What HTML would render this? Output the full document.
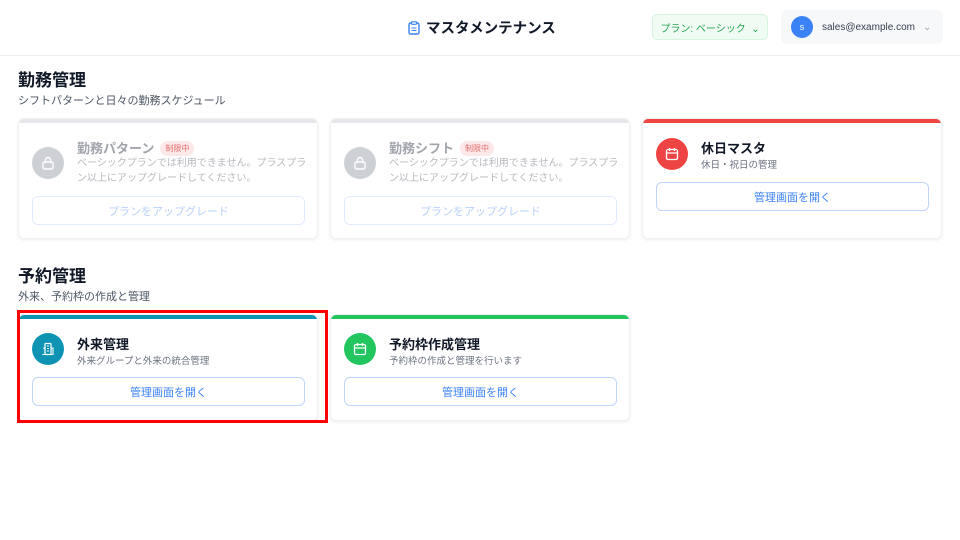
<!DOCTYPE html>
<html><head><meta charset="utf-8"><style>
*{margin:0;padding:0;box-sizing:border-box}
body{width:960px;height:540px;background:#fff;font-family:"Liberation Sans","Noto Sans CJK JP",sans-serif;position:relative;overflow:hidden;color:#111827}
.hdr{position:absolute;left:0;top:0;width:960px;height:56px;border-bottom:1px solid #eceef1}
.a{position:absolute}
.card{position:absolute;width:300px;background:#fff;border-radius:6px;box-shadow:0 1px 3px rgba(0,0,0,.08);border:1px solid #f0f1f3;overflow:hidden}
.bar{position:absolute;left:0;top:0;right:0;height:4px}
.ic{position:absolute;left:13px;width:32px;height:32px;border-radius:50%;display:flex;align-items:center;justify-content:center}
.t{position:absolute;left:58px;font-size:13px;font-weight:bold}
.s{position:absolute;left:58px;font-size:9.5px;color:#6b7280}
.btn{position:absolute;left:13px;width:273px;height:29px;border:1px solid #bfd3fb;border-radius:6px;font-size:11px;color:#3b82f6;display:flex;align-items:center;justify-content:center}
.h2{position:absolute;left:18px;font-size:17px;font-weight:bold}
.sub{position:absolute;left:18px;font-size:11px;color:#4b5563}
.badge{display:inline-block;font-size:8px;color:#e07070;background:#fde8e8;border-radius:9px;padding:2px 5px;margin-left:6px;vertical-align:2px;font-weight:normal}
</style></head><body>
<div class="hdr"></div>
<div class="a" style="left:408px;top:17px;font-size:14.5px;font-weight:bold;display:flex;align-items:center;gap:6px">
<svg width="12" height="14" viewBox="0 0 12 14"><rect x="1" y="2" width="10" height="11" rx="1.5" fill="none" stroke="#3b82f6" stroke-width="1.4"/><rect x="3.5" y="0.8" width="5" height="2.5" rx=".6" fill="#fff" stroke="#3b82f6" stroke-width="1.2"/><path d="M3.5 7h5M3.5 9.5h5" stroke="#3b82f6" stroke-width="1.1"/></svg>マスタメンテナンス</div>
<div class="a" style="left:652px;top:14px;width:116px;height:26px;border:1px solid #d6f3dd;background:#f0fcf3;border-radius:5px;font-size:10px;color:#22a352;display:flex;align-items:center;justify-content:center">プラン: ベーシック &nbsp;⌄</div>
<div class="a" style="left:781px;top:10px;width:162px;height:34px;background:#f7f8fa;border-radius:6px;font-size:10px;color:#374151;display:flex;align-items:center">
<div style="width:22px;height:22px;border-radius:50%;background:#3b82f6;color:#fff;font-size:9px;display:flex;align-items:center;justify-content:center;margin-left:10px;margin-right:9px">s</div>sales@example.com<span style="color:#9ca3af;margin-left:8px">⌄</span></div>

<div class="h2" style="top:66px">勤務管理</div>
<div class="sub" style="top:92px">シフトパターンと日々の勤務スケジュール</div>

<div class="card" style="left:18px;top:118px;height:121px"><div class="bar" style="background:#e5e7eb"></div>
<div class="ic" style="top:28px;background:#cdd0d5"><svg width="14" height="14" viewBox="0 0 14 14"><rect x="2" y="6" width="10" height="7" rx="1.5" fill="none" stroke="#fff" stroke-width="1.4"/><path d="M4.5 6V4a2.5 2.5 0 0 1 5 0v2" fill="none" stroke="#fff" stroke-width="1.4"/></svg></div>
<div class="t" style="top:19px;color:#a0a4ab">勤務パターン<span class="badge">制限中</span></div>
<div class="s" style="top:37px;color:#b6b9bf;width:232px;line-height:15px;font-size:10px">ベーシックプランでは利用できません。プラスプラン以上にアップグレードしてください。</div>
<div class="btn" style="top:77px;border-color:#e2ebfd;color:#b9d0fb">プランをアップグレード</div></div>

<div class="card" style="left:330px;top:118px;height:121px"><div class="bar" style="background:#e5e7eb"></div>
<div class="ic" style="top:28px;background:#cdd0d5"><svg width="14" height="14" viewBox="0 0 14 14"><rect x="2" y="6" width="10" height="7" rx="1.5" fill="none" stroke="#fff" stroke-width="1.4"/><path d="M4.5 6V4a2.5 2.5 0 0 1 5 0v2" fill="none" stroke="#fff" stroke-width="1.4"/></svg></div>
<div class="t" style="top:19px;color:#a0a4ab">勤務シフト<span class="badge">制限中</span></div>
<div class="s" style="top:37px;color:#b6b9bf;width:232px;line-height:15px;font-size:10px">ベーシックプランでは利用できません。プラスプラン以上にアップグレードしてください。</div>
<div class="btn" style="top:77px;border-color:#e2ebfd;color:#b9d0fb">プランをアップグレード</div></div>

<div class="card" style="left:642px;top:118px;height:121px"><div class="bar" style="background:#ef4444"></div>
<div class="ic" style="top:19px;background:#ef4444"><svg width="14" height="14" viewBox="0 0 14 14"><rect x="1.5" y="2.5" width="11" height="10" rx="1.5" fill="none" stroke="#fff" stroke-width="1.3"/><path d="M1.5 6h11M4.5 1v3M9.5 1v3" stroke="#fff" stroke-width="1.3"/></svg></div>
<div class="t" style="top:19px">休日マスタ</div>
<div class="s" style="top:38px">休日・祝日の管理</div>
<div class="btn" style="top:63px">管理画面を開く</div></div>

<div class="h2" style="top:262px">予約管理</div>
<div class="sub" style="top:288px">外来、予約枠の作成と管理</div>

<div class="card" style="left:18px;top:314px;height:107px"><div class="bar" style="background:#0e93b4"></div>
<div class="ic" style="top:18px;background:#0e93b4"><svg width="14" height="14" viewBox="0 0 14 14"><rect x="4" y="1.5" width="6" height="11" rx=".8" fill="none" stroke="#fff" stroke-width="1.2"/><path d="M1.5 12.5h11M2 6h2v6.5M10 6h2v6.5M6 4h2M6 6.5h2M6 9h2" fill="none" stroke="#fff" stroke-width="1.1"/></svg></div>
<div class="t" style="top:19px">外来管理</div>
<div class="s" style="top:38px">外来グループと外来の統合管理</div>
<div class="btn" style="top:62px">管理画面を開く</div></div>

<div class="card" style="left:330px;top:314px;height:107px"><div class="bar" style="background:#22c55e"></div>
<div class="ic" style="top:18px;background:#22c55e"><svg width="14" height="14" viewBox="0 0 14 14"><rect x="1.5" y="2.5" width="11" height="10" rx="1.5" fill="none" stroke="#fff" stroke-width="1.3"/><path d="M1.5 6h11M4.5 1v3M9.5 1v3" stroke="#fff" stroke-width="1.3"/></svg></div>
<div class="t" style="top:19px">予約枠作成管理</div>
<div class="s" style="top:38px">予約枠の作成と管理を行います</div>
<div class="btn" style="top:62px">管理画面を開く</div></div>

<div class="a" style="left:17px;top:310px;width:311px;height:113px;border:3px solid #f00"></div>
</body></html>
